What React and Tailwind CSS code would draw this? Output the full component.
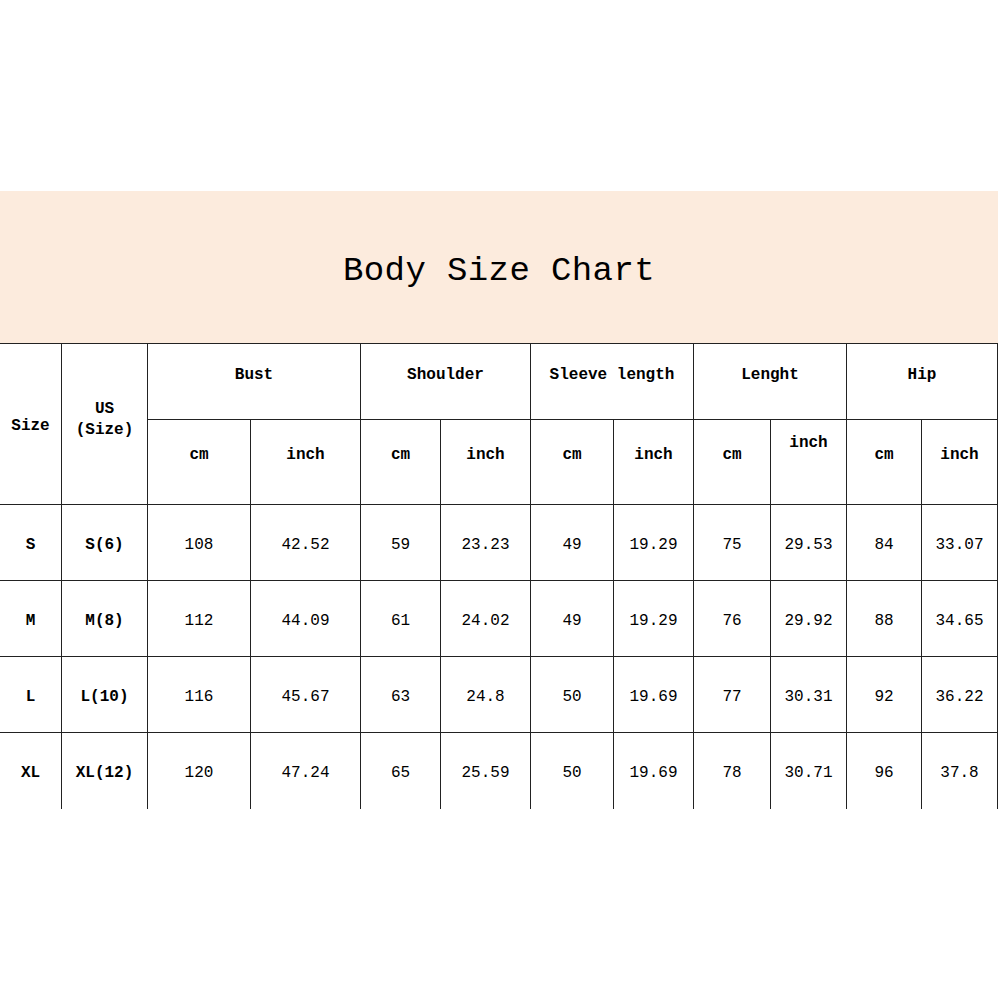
export default function App() {
  const groups = ['Bust', 'Shoulder', 'Sleeve length', 'Lenght', 'Hip'];
  const rows = [
    ['S', 'S(6)', '108', '42.52', '59', '23.23', '49', '19.29', '75', '29.53', '84', '33.07'],
    ['M', 'M(8)', '112', '44.09', '61', '24.02', '49', '19.29', '76', '29.92', '88', '34.65'],
    ['L', 'L(10)', '116', '45.67', '63', '24.8', '50', '19.69', '77', '30.31', '92', '36.22'],
    ['XL', 'XL(12)', '120', '47.24', '65', '25.59', '50', '19.69', '78', '30.71', '96', '37.8'],
  ];
  const line = 'border-[#222]';

  return (
    <div className="w-[1000px] h-[1000px] bg-white pt-[191px] text-black" style={{ fontFamily: '"Liberation Mono", "DejaVu Sans Mono", monospace' }}>
      {/* Title band */}
      <div className="w-[998px] h-[152px] bg-[#fcebdd] flex items-center justify-center pt-[8px]">
        <h1 className="text-[34px] leading-none tracking-[0.4px]">Body Size Chart</h1>
      </div>

      {/* Table */}
      <div className={`w-[998px] grid grid-cols-[62px_86px_103px_110px_80px_90px_83px_80px_77px_76px_75px_76px] grid-rows-[76px_85px_76px_76px_76px_76px] border-t ${line} text-[16px]`}>
        <div className={`row-span-2 border-r border-b ${line} flex items-center justify-center font-bold pt-[4px]`}>Size</div>
        <div className={`row-span-2 border-r border-b ${line} flex flex-col items-center justify-center font-bold leading-[21px] pb-[8px]`}>
          <span>US</span>
          <span>(Size)</span>
        </div>
        {groups.map((g) => (
          <div key={g} className={`col-span-2 border-r border-b ${line} flex justify-center pt-[19px] font-bold`}>{g}</div>
        ))}
        {groups.map((g) => (
          <div key={g + 'u'} className="contents">
            <div className={`border-r border-b ${line} flex items-center justify-center pb-[14px] font-bold`}>cm</div>
            <div className={`border-r border-b ${line} flex items-center justify-center font-bold ${g === 'Lenght' ? 'pb-[38px]' : 'pb-[14px]'}`}>inch</div>
          </div>
        ))}
        {rows.map((r, i) => r.map((c, j) => (
          <div key={i + '-' + j} className={`border-r ${i < rows.length - 1 ? 'border-b' : ''} ${line} flex items-center justify-center pt-[4px] ${j < 2 ? 'font-bold' : ''}`}>{c}</div>
        )))}
      </div>
    </div>
  );
}
